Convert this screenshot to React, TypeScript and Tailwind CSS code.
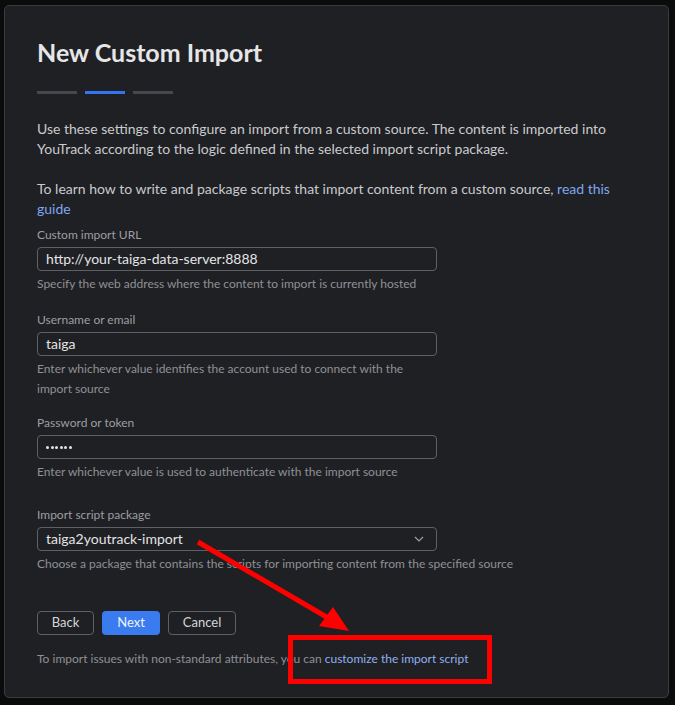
import React from 'react'

const font = { fontFamily: 'Lato, "Noto Sans", sans-serif' }

function Field({ label, value, hint, select, mt }: { label: string, value: React.ReactNode, hint: React.ReactNode, select?: boolean, mt: string }) {
  return (
    <div className={mt}>
      <div className="text-[12px] leading-[16px] text-[#9d9ea3]">{label}</div>
      <div className="mt-[4px] flex h-[24px] w-[400px] items-center justify-between rounded-[4px] border border-[#5f6066] px-[8px]">
        <span className="text-[14px] leading-[18px] text-[#e4e4e6]">{value}</span>
        {select && (
          <svg width="10" height="6" viewBox="0 0 10 6" className="mr-[4px]">
            <path d="M1 1l4 4 4-4" fill="none" stroke="#9d9ea3" strokeWidth="1.2" />
          </svg>
        )}
      </div>
      <div className="mt-[3px] w-[540px] text-[12px] leading-[20px] text-[#8f9095]">{hint}</div>
    </div>
  )
}

function Dots() {
  return (
    <span className="flex items-center gap-[1.5px]" aria-label="password">
      {[0, 1, 2, 3, 4, 5].map(i => (
        <span key={i} className="h-[3px] w-[3px] rounded-full bg-[#e4e4e6]" />
      ))}
    </span>
  )
}

export default function App() {
  return (
    <div className="relative h-[705px] w-[675px] overflow-hidden bg-[#0b0b0c]" style={font}>
      <div className="ml-[4px] mt-[5px] h-[693px] w-[665px] rounded-[5px] border border-[#3b3c40] bg-[#1f2024] pl-[32px] pt-[30px]">
        <h1 className="text-[25px] font-bold leading-[32px] text-[#e6e6e8]">New Custom Import</h1>
        <div className="mt-[23px] flex gap-[8px]">
          <div className="h-[3px] w-[40px] bg-[#46474c]" />
          <div className="h-[3px] w-[40px] bg-[#3574f0]" />
          <div className="h-[3px] w-[40px] bg-[#46474c]" />
        </div>
        <p className="mt-[25px] w-[590px] text-[14px] leading-[20px] text-[#c9cacd]">
          Use these settings to configure an import from a custom source. The content is imported into YouTrack according to the logic defined in the selected import script package.
        </p>
        <p className="mt-[20px] w-[590px] text-[14px] leading-[20px] text-[#c9cacd]">
          To learn how to write and package scripts that import content from a custom source, <span className="text-[#7ea6f2]">read this guide</span>
        </p>
        <Field mt="mt-[8px]" label="Custom import URL" value="http://your-taiga-data-server:8888" hint="Specify the web address where the content to import is currently hosted" />
        <Field mt="mt-[18px]" label="Username or email" value="taiga" hint={<>Enter whichever value identifies the account used to connect with the<br />import source</>} />
        <Field mt="mt-[16px]" label="Password or token" value={<Dots />} hint="Enter whichever value is used to authenticate with the import source" />
        <Field mt="mt-[25px]" select label="Import script package" value="taiga2youtrack-import" hint="Choose a package that contains the scripts for importing content from the specified source" />
        <div className="mt-[37px] flex gap-[8px] text-[13px]">
          <button className="h-[24px] w-[57px] rounded-[4px] border border-[#5f6066] text-[#d4d5d8]">Back</button>
          <button className="h-[24px] w-[58px] rounded-[4px] bg-[#3b7bf0] text-[#f0f3fa]">Next</button>
          <button className="h-[24px] w-[68px] rounded-[4px] border border-[#5f6066] text-[#d4d5d8]">Cancel</button>
        </div>
        <p className="mt-[14px] text-[12px] leading-[20px] text-[#8f9095]">
          To import issues with non-standard attributes, you can <span className="text-[#8fb0f0]">customize the import script</span>
        </p>
      </div>
      <svg className="pointer-events-none absolute left-0 top-0" width="675" height="705" viewBox="0 0 675 705">
        <line x1="198" y1="542" x2="330" y2="619" stroke="#ff0000" strokeWidth="5" />
        <polygon points="349,631 319,626 333,607" fill="#ff0000" />
        <rect x="290.5" y="637.5" width="199" height="44" fill="none" stroke="#ff0000" strokeWidth="5" />
      </svg>
    </div>
  )
}
